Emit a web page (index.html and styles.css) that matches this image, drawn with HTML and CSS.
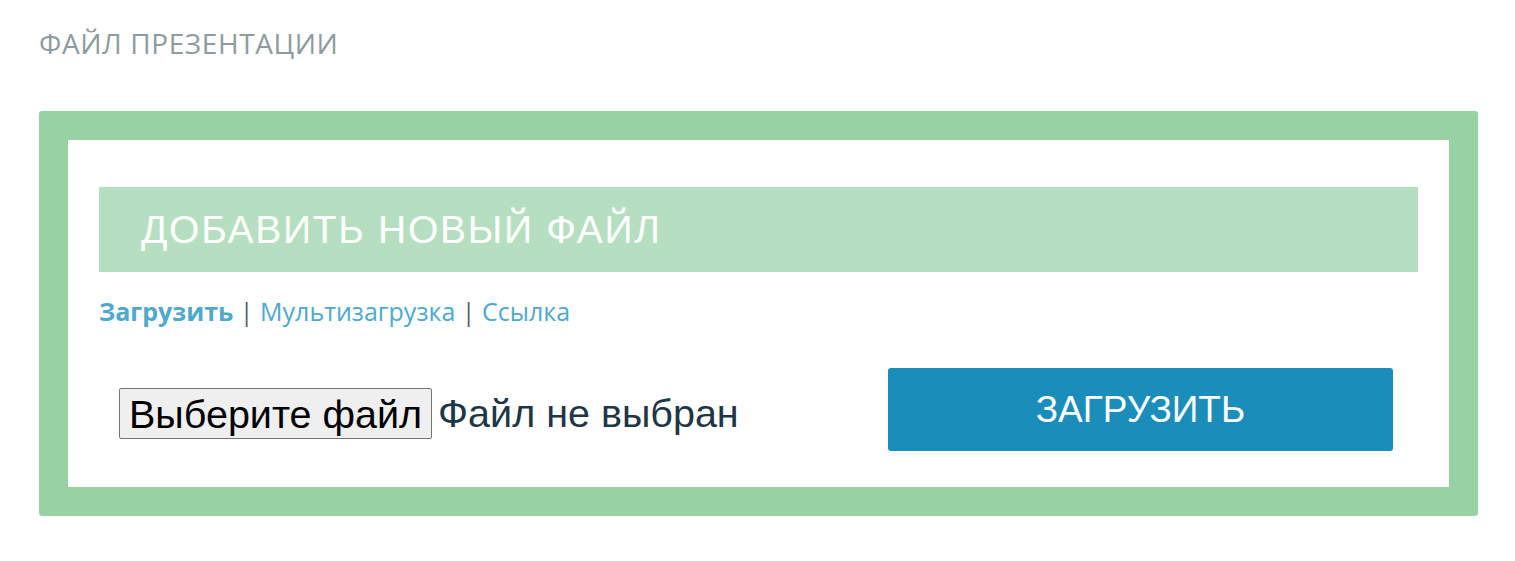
FILE: index.html
```html
<!DOCTYPE html>
<html lang="ru">
<head>
<meta charset="utf-8">
<title>Файл презентации</title>
<link rel="stylesheet" href="styles.css">
</head>
<body>
<div class="page">
  <div class="section-title">ФАЙЛ ПРЕЗЕНТАЦИИ</div>
  <div class="upload-frame">
    <div class="upload-inner">
      <div class="upload-header">ДОБАВИТЬ НОВЫЙ ФАЙЛ</div>
      <div class="tabs">
        <a class="tab active" href="#">Загрузить</a>
        <span class="sep">|</span>
        <a class="tab" href="#">Мультизагрузка</a>
        <span class="sep">|</span>
        <a class="tab" href="#">Ссылка</a>
      </div>
      <div class="upload-row">
        <div class="file-col">
          <label class="file-picker">
            <span class="file-btn">Выберите файл</span><span class="file-name">Файл не выбран</span>
          </label>
        </div>
        <div class="btn-col">
          <button class="upload-btn" type="button">ЗАГРУЗИТЬ</button>
        </div>
      </div>
    </div>
  </div>
</div>
</body>
</html>
```

FILE: styles.css
```css
html, body {
  margin: 0;
  padding: 0;
  background: #ffffff;
}

.page {
  padding: 27px 37px 0 39px;
}

.section-title {
  font-family: "Open Sans", "Noto Sans", sans-serif;
  font-size: 28px;
  line-height: 32px;
  color: #8e9b9e;
  letter-spacing: 0.6px;
  margin-bottom: 52px;
}

.upload-frame {
  background: #98d1a3;
  border-radius: 3px;
  padding: 29px;
}

.upload-inner {
  background: #ffffff;
  padding: 47px 31px 36px 31px;
}

.upload-header {
  background: #b6dfc1;
  color: #ffffff;
  font-family: "Liberation Sans", Arial, sans-serif;
  font-size: 39px;
  letter-spacing: 1.7px;
  height: 85px;
  line-height: 86px;
  padding-left: 42px;
}

.tabs {
  font-family: "Open Sans", "Noto Sans", sans-serif;
  font-size: 25px;
  line-height: 30px;
  color: #555f63;
  margin-top: 24px;
}

.tab {
  color: #4ea9cc;
  text-decoration: none;
}

.tab.active {
  font-weight: 700;
}

.upload-row {
  display: grid;
  grid-template-columns: 789px 1fr;
  align-items: center;
  margin-top: 42px;
}

.file-col {
  padding-left: 20px;
  padding-top: 8px;
}

.file-picker {
  display: flex;
  align-items: center;
  font-family: "Liberation Sans", Arial, sans-serif;
  font-size: 39.5px;
}

.file-btn {
  color: #000;
  background: #efefef;
  border: 1px solid #767676;
  border-radius: 2px;
  padding: 0 9px;
  height: 49px;
  line-height: 50px;
  margin-right: 6px;
}

.file-name {
  color: #1e3645;
}

.btn-col {
  padding-right: 25px;
}

.upload-btn {
  display: block;
  width: 100%;
  height: 83px;
  background: #1b8dba;
  color: #ffffff;
  border: none;
  border-radius: 3px;
  font-family: "Liberation Sans", Arial, sans-serif;
  font-size: 37px;
}
```
